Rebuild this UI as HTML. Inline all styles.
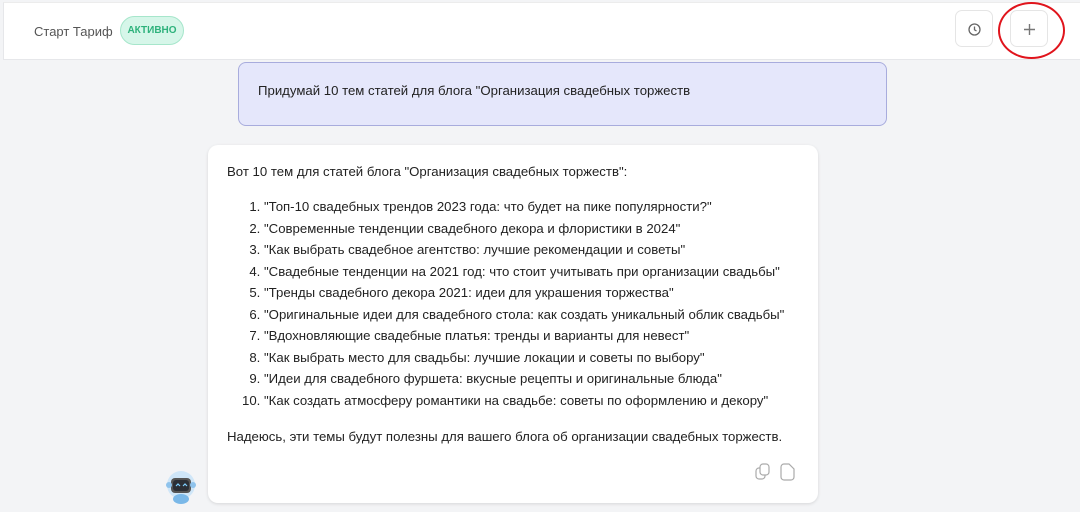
<!DOCTYPE html>
<html><head><meta charset="utf-8"><style>
*{margin:0;padding:0;box-sizing:border-box}
body{width:1080px;height:512px;overflow:hidden;background:#f3f4f6;font-family:"Liberation Sans",sans-serif;color:#222;position:relative}
.hdr{position:absolute;left:3px;top:2px;right:0;height:58px;background:#fff;border-bottom:1px solid #e6e7ea;border-left:1px solid #e6e7ea;border-top:1px solid #ececec}
.t{position:absolute;left:30px;top:21px;font-size:13px;color:#555}
.badge{position:absolute;left:116px;top:13px;width:64px;height:29px;border-radius:15px;background:#d6f6e9;border:1px solid #a6e6cb;color:#2eb27c;font-size:10px;font-weight:bold;text-align:center;line-height:27px}
.btn{position:absolute;top:10px;width:38px;height:37px;border:1px solid #e5e5e5;border-radius:7px;background:#fff}
.ell{position:absolute;left:998px;top:2px;width:67px;height:57px;border:2px solid #e0141c;border-radius:50%}
.user{position:absolute;left:238px;top:62px;width:649px;height:64px;background:#e5e7fb;border:1px solid #a8acdd;border-radius:8px;font-size:13.2px;padding:20px 0 0 19px;color:#222}
.card{position:absolute;left:208px;top:145px;width:610px;height:358px;background:#fff;border-radius:10px;box-shadow:0 1px 3px rgba(0,0,0,.12);font-size:13.2px;padding:19px 0 0 19px}
ol{margin:17px 0 0 37px}
li{height:21.5px;line-height:21.5px}
.end{margin-top:18px}
</style></head><body>
<div class="hdr"><div class="t">Старт Тариф</div><div class="badge">АКТИВНО</div></div>
<div class="btn" style="left:955px"><svg width="38" height="37" viewBox="0 0 38 37"><circle cx="18.5" cy="18.5" r="5.5" fill="none" stroke="#666" stroke-width="1.3"/><path d="M18.5 15.5v3.3l2 1.2" fill="none" stroke="#666" stroke-width="1.3"/></svg></div>
<div class="btn" style="left:1010px"><svg width="38" height="37" viewBox="0 0 38 37"><path d="M18.5 13v11M13 18.5h11" stroke="#777" stroke-width="1.4"/></svg></div>
<div class="ell"></div>
<div class="user">Придумай 10 тем статей для блога "Организация свадебных торжеств</div>
<div class="card">
<div>Вот 10 тем для статей блога "Организация свадебных торжеств":</div>
<ol>
<li>"Топ-10 свадебных трендов 2023 года: что будет на пике популярности?"</li>
<li>"Современные тенденции свадебного декора и флористики в 2024"</li>
<li>"Как выбрать свадебное агентство: лучшие рекомендации и советы"</li>
<li>"Свадебные тенденции на 2021 год: что стоит учитывать при организации свадьбы"</li>
<li>"Тренды свадебного декора 2021: идеи для украшения торжества"</li>
<li>"Оригинальные идеи для свадебного стола: как создать уникальный облик свадьбы"</li>
<li>"Вдохновляющие свадебные платья: тренды и варианты для невест"</li>
<li>"Как выбрать место для свадьбы: лучшие локации и советы по выбору"</li>
<li>"Идеи для свадебного фуршета: вкусные рецепты и оригинальные блюда"</li>
<li>"Как создать атмосферу романтики на свадьбе: советы по оформлению и декору"</li>
</ol>
<div class="end">Надеюсь, эти темы будут полезны для вашего блога об организации свадебных торжеств.</div>
<svg style="position:absolute;left:546px;top:317px" width="50" height="20" viewBox="0 0 50 20"><rect x="2" y="6" width="9" height="11" rx="3" fill="none" stroke="#aaa" stroke-width="1.2"/><rect x="6" y="2" width="9" height="11" rx="3" fill="#fff" stroke="#aaa" stroke-width="1.2"/><path d="M27 5a3 3 0 0 1 3-3h5l5 5v8a3 3 0 0 1-3 3h-7a3 3 0 0 1-3-3z" fill="none" stroke="#aaa" stroke-width="1.2"/></svg>
</div>
<svg style="position:absolute;left:164px;top:470px" width="36" height="36" viewBox="0 0 36 36"><circle cx="17" cy="15" r="14" fill="#cfe6f8"/><rect x="7" y="8" width="20" height="15" rx="4" fill="#555"/><rect x="9" y="10" width="16" height="11" rx="3" fill="#2b2f36"/><path d="M12 16l2-2 2 2M19 16l2-2 2 2" stroke="#7fd0ff" stroke-width="1.2" fill="none"/><ellipse cx="17" cy="29" rx="8" ry="5" fill="#7ab8e8"/><circle cx="5" cy="15" r="3" fill="#8fc3ec"/><circle cx="29" cy="15" r="3" fill="#8fc3ec"/></svg>
</body></html>
